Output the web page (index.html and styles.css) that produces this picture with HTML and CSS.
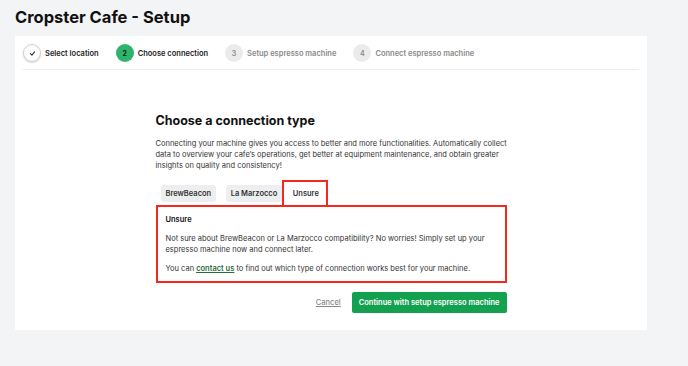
FILE: index.html
```html
<!DOCTYPE html>
<html lang="en">
<head>
    <meta charset="UTF-8">
    <meta name="viewport" content="width=device-width, initial-scale=1.0">
    <title>Cropster Cafe - Setup</title>
    <link rel="stylesheet" href="styles.css">
</head>
<body>
    <h1 class="page-title">Cropster Cafe - Setup</h1>

    <div class="setup-card">
        <ol class="stepper">
            <li class="step done">
                <span class="step-dot">
                    <svg width="7" height="7" viewBox="0 0 10 10"><path d="M2 5.2 L4.2 7.3 L8 2.8" fill="none" stroke="#333" stroke-width="1.6" stroke-linecap="round" stroke-linejoin="round"/></svg>
                </span>
                <span class="step-label">Select location</span>
            </li>
            <li class="step active">
                <span class="step-dot">2</span>
                <span class="step-label">Choose connection</span>
            </li>
            <li class="step">
                <span class="step-dot">3</span>
                <span class="step-label">Setup espresso machine</span>
            </li>
            <li class="step">
                <span class="step-dot">4</span>
                <span class="step-label">Connect espresso machine</span>
            </li>
        </ol>

        <div class="connection">
            <h2 class="connection-title">Choose a connection type</h2>
            <p class="connection-intro">Connecting your machine gives you access to better and more functionalities. Automatically collect data to overview your cafe’s operations, get better at equipment maintenance, and obtain greater insights on quality and consistency!</p>

            <div class="tabs">
                <button class="tab">BrewBeacon</button>
                <button class="tab">La Marzocco</button>
                <button class="tab selected">Unsure</button>
            </div>

            <div class="tab-panel">
                <h3 class="panel-title">Unsure</h3>
                <p>Not sure about BrewBeacon or La Marzocco compatibility? No worries! Simply set up your espresso machine now and connect later.</p>
                <p>You can <a href="#" class="link">contact us</a> to find out which type of connection works best for your machine.</p>
            </div>

            <div class="actions">
                <a href="#" class="cancel">Cancel</a>
                <button class="btn-primary">Continue with setup espresso machine</button>
            </div>
        </div>
    </div>
</body>
</html>
```

FILE: styles.css
```css
  body {
    margin: 0;
    padding: 6px 15px 0 15px;
    background-color: #f3f4f6;
    font-family: Inter, "Liberation Sans", sans-serif;
    color: #1a1a1a;
    height: 366px;
    box-sizing: border-box;
  }

  .page-title {
    margin: 0 0 8px 0;
    font-size: 16.5px;
    font-weight: 700;
    line-height: 22px;
    color: #111;
  }

  .setup-card {
    width: 632px;
    background-color: #fff;
    padding: 8px 8px 17px 8px;
    box-sizing: border-box;
  }

  .stepper {
    list-style: none;
    margin: 0;
    padding: 0 0 7px 0;
    display: flex;
    gap: 17px;
    border-bottom: 1px solid #ececec;
  }

  .step {
    display: flex;
    align-items: center;
    gap: 4px;
  }

  .step-dot {
    width: 18px;
    height: 18px;
    border-radius: 50%;
    background-color: #ebebeb;
    color: #888;
    font-size: 7px;
    font-weight: 600;
    display: flex;
    align-items: center;
    justify-content: center;
  }

  .step-label {
    font-size: 7.5px;
    font-weight: 600;
    color: #8a8a8a;
  }

  .step.done .step-dot {
    background-color: #fff;
    border: 1px solid #cfcfcf;
    box-shadow: 0 1px 2px rgba(0, 0, 0, 0.15);
    box-sizing: border-box;
  }

  .step.active .step-dot {
    background-color: #2eb36b;
    color: #111;
  }

  .step.done .step-label,
  .step.active .step-label {
    color: #222;
  }

  .connection {
    width: 351px;
    margin: 43px auto 0 auto;
  }

  .connection-title {
    margin: 0 0 9px 0;
    font-size: 12.5px;
    font-weight: 700;
    line-height: 16px;
    color: #111;
  }

  .connection-intro {
    margin: 0 -5px 9px 0;
    font-size: 7.5px;
    line-height: 11px;
    color: #333;
  }

  .tabs {
    display: flex;
    gap: 9.5px;
    padding-left: 5px;
    align-items: flex-end;
  }

  .tab {
    font-family: inherit;
    font-size: 7.5px;
    font-weight: 600;
    color: #333;
    background-color: #eceef0;
    border: none;
    border-radius: 3px;
    height: 17px;
    padding: 0 5px;
    margin: 0 0 3px 0;
  }

  .tab.selected {
    background-color: #fff;
    border: 2px solid #f5281e;
    border-bottom: none;
    border-radius: 0;
    height: 25px;
    padding: 0 7px 0 9px;
    margin: 0 0 0 -10px;
  }

  .tab-panel {
    border: 2px solid #f5281e;
    padding: 7px 8px 7px 8px;
    font-size: 7.5px;
    line-height: 11px;
    color: #333;
  }

  .panel-title {
    margin: 0 0 8px 0;
    font-size: 7.5px;
    font-weight: 600;
    color: #111;
  }

  .tab-panel p {
    margin: 0 0 8px 0;
  }

  .tab-panel p:last-child {
    margin-bottom: 0;
  }

  .link {
    color: #1f6f3a;
    font-weight: 600;
  }

  .actions {
    display: flex;
    justify-content: flex-end;
    align-items: center;
    gap: 11px;
    margin-top: 9px;
  }

  .cancel {
    font-size: 7.5px;
    font-weight: 500;
    color: #888;
  }

  .btn-primary {
    font-family: inherit;
    font-size: 7.5px;
    font-weight: 600;
    color: #fff;
    background-color: #13a04f;
    border: none;
    border-radius: 2px;
    height: 21px;
    padding: 0 7px;
  }
```
